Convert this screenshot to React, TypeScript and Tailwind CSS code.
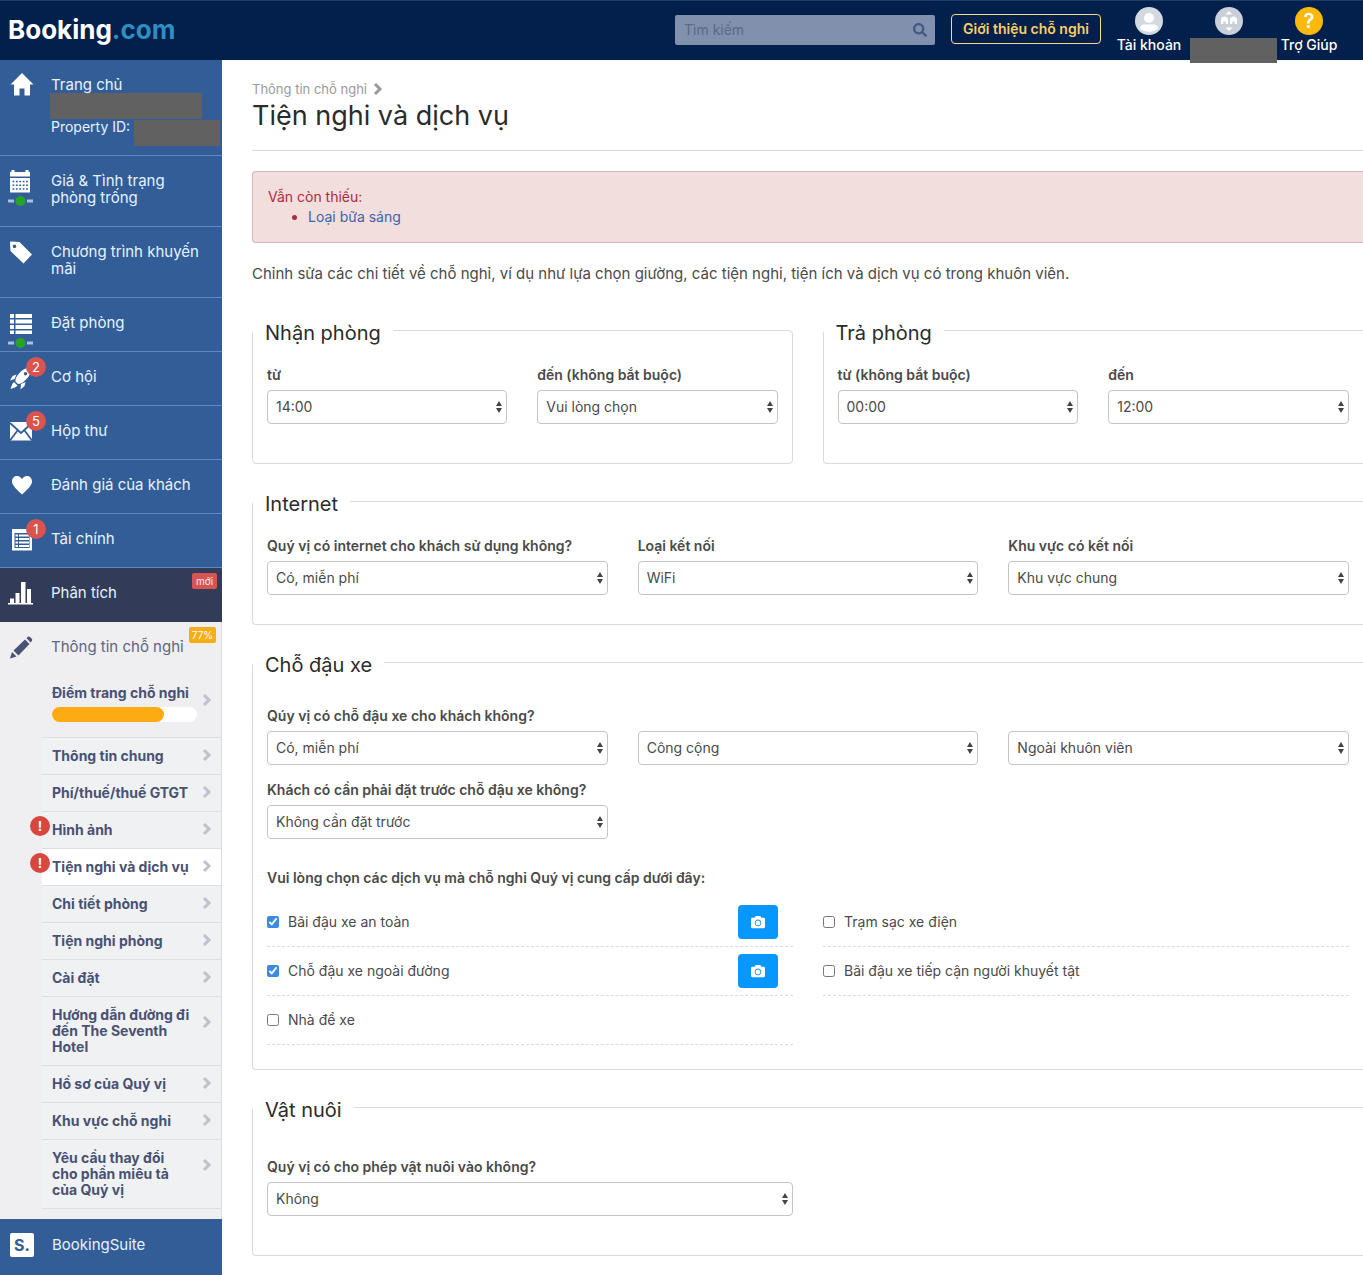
import React, { useState } from "react";
import { FaCamera, FaSearch } from "react-icons/fa";

interface NavItem {
  label: string;
  icon: React.ReactNode;
  count?: number;
  status?: boolean;
}

interface SubItem {
  lines: string[];
  alert?: boolean;
  active?: boolean;
}

interface SelectFieldProps {
  id: string;
  label?: string;
  ariaLabel?: string;
  options: string[];
}

interface Service {
  id: string;
  label: string;
  checked: boolean;
  photo: boolean;
}

const Icon = ({ children }: { children: React.ReactNode }) => (
  <svg viewBox="0 0 26 24" className="w-[26px] h-6 block" aria-hidden="true">
    {children}
  </svg>
);

const Chevron = ({ className = "" }: { className?: string }) => (
  <svg
    viewBox="0 0 10 14"
    className={`w-[10px] h-[14px] shrink-0 ${className}`}
    aria-hidden="true"
  >
    <path
      d="M2 2l5 5-5 5"
      fill="none"
      stroke="currentColor"
      strokeWidth="3"
    />
  </svg>
);

const HomeIcon = (
  <Icon>
    <path
      d="M14 0 25.500 11.500H22V22.500H16.500V15.500H11.500V22.500H6V11.500H2.500z"
      fill="#fff"
    />
  </Icon>
);

const CalendarIcon = (
  <Icon>
    <path d="M2 2h1.500V0h3v2h11V0h3v2H22v4.500H2zM2 8h20v14.500H2z" fill="#fff" />
    <path
      d="M4.500 11.500h15.500M4.500 15.200h15.500M4.500 19h15.500"
      stroke="#335d97"
      strokeWidth="1.600"
      strokeDasharray="1.800 1.600"
    />
  </Icon>
);

const TagIcon = (
  <Icon>
    <path
      fillRule="evenodd"
      d="M2 1.500Q2 .5 3 .5L11.500 1 24 13.500 15.500 22.500 2.500 10zM6.500 3.500a1.800 1.800 0 1 0 .01 0z"
      fill="#fff"
    />
  </Icon>
);

const ListIcon = (
  <Icon>
    <path
      d="M2 2h4v4H2zM7.500 2H24v4H7.500zM2 7.500h4v4H2zM7.500 7.500H24v4H7.500zM2 13h4v4H2zM7.500 13H24v4H7.500zM2 18.500h4v3.500H2zM7.500 18.500H24v3.500H7.500z"
      fill="#fff"
    />
  </Icon>
);

const RocketIcon = (
  <Icon>
    <path
      fillRule="evenodd"
      d="M23.500 1C18 1.500 13.500 4 10.500 8 8 11 7 13.500 7.500 15.500L10 18c2.500 0 5-1.500 7.500-4 4-3.500 6-8 6-13zM17.500 6a1.700 1.700 0 1 1-.01 0z"
      fill="#fff"
    />
    <path
      d="M8.500 8.500 4.500 10 2 14.500l4.500-1.500zM17.500 16l-1 4-4 3.500.5-5.500zM6 16l3.500 3.500-1.500 1.500-5.500 2L4.500 17.500z"
      fill="#fff"
    />
  </Icon>
);

const MailIcon = (
  <Icon>
    <path d="M2 2h22v18.500H2z" fill="#fff" />
    <path
      d="M2 3l11 10L24 3M2 20.500l7.500-10M24 20.500l-7.500-10"
      fill="none"
      stroke="#335d97"
      strokeWidth="1.800"
    />
  </Icon>
);

const HeartIcon = (
  <Icon>
    <path
      d="M14 20.500C10 16.500 4 12 4 7.500 4 4 6.500 2 9 2c2.500 0 4 1.500 5 3 1-1.500 2.500-3 5-3 2.500 0 5 2 5 5.500 0 4.500-6 9-10 13z"
      fill="#fff"
    />
  </Icon>
);

const FinanceIcon = (
  <Icon>
    <path d="M4 1h20v21.500H4z" fill="#fff" />
    <path d="M6.500 5h15v15h-15z" fill="#335d97" />
    <path
      d="M7.500 6.500h2.500v2H7.500zM11 6.500h10v2H11zM7.500 10h2.500v2H7.500zM11 10h10v2H11zM7.500 13.500h2.500v2H7.500zM11 13.500h10v2H11zM7.500 17h2.500v2H7.500zM11 17h10v2H11z"
      fill="#fff"
    />
  </Icon>
);

const ChartIcon = (
  <Icon>
    <path
      d="M0 21h25v1.500H0zM2 16.500h4V21H2zM7.500 11h4v10h-4zM13 0h4.500v21H13zM19 7h4v14h-4z"
      fill="#fff"
    />
  </Icon>
);

const PencilIcon = (
  <Icon>
    <path
      d="M2 22.500l2-6.500 4.500 4.500zM5.500 14.500 17 3.500l4.500 4.500L10.500 19.500zM18.500 2l1.500-1.200q1-.6 2 .2l1.800 1.800q.8 1 .2 2L22.500 6.500z"
      fill="#485273"
    />
  </Icon>
);

const navItems: NavItem[] = [
  { label: "Giá & Tình trạng\nphòng trống", icon: CalendarIcon, status: true },
  { label: "Chương trình khuyến\nmãi", icon: TagIcon },
  { label: "Đặt phòng", icon: ListIcon, status: true },
  { label: "Cơ hội", icon: RocketIcon, count: 2 },
  { label: "Hộp thư", icon: MailIcon, count: 5 },
  { label: "Đánh giá của khách", icon: HeartIcon },
  { label: "Tài chính", icon: FinanceIcon, count: 1 },
];

const subItems: SubItem[] = [
  { lines: ["Thông tin chung"] },
  { lines: ["Phí/thuế/thuế GTGT"] },
  { lines: ["Hình ảnh"], alert: true },
  { lines: ["Tiện nghi và dịch vụ"], alert: true, active: true },
  { lines: ["Chi tiết phòng"] },
  { lines: ["Tiện nghi phòng"] },
  { lines: ["Cài đặt"] },
  { lines: ["Hướng dẫn đường đi", "đến The Seventh", "Hotel"] },
  { lines: ["Hồ sơ của Quý vị"] },
  { lines: ["Khu vực chỗ nghỉ"] },
  { lines: ["Yêu cầu thay đổi", "cho phần miêu tả", "của Quý vị"] },
];

const initialServices: Service[][] = [
  [
    { id: "secured", label: "Bãi đậu xe an toàn", checked: true, photo: true },
    { id: "street", label: "Chỗ đậu xe ngoài đường", checked: true, photo: true },
    { id: "garage", label: "Nhà để xe", checked: false, photo: false },
  ],
  [
    { id: "charging", label: "Trạm sạc xe điện", checked: false, photo: false },
    {
      id: "accessible",
      label: "Bãi đậu xe tiếp cận người khuyết tật",
      checked: false,
      photo: false,
    },
  ],
];

const SelectField: React.FC<SelectFieldProps> = ({
  id,
  label,
  ariaLabel,
  options,
}) => (
  <div className="flex flex-col justify-end min-w-0">
    {label && (
      <label
        htmlFor={id}
        className="mb-[5px] text-sm leading-5 font-semibold whitespace-nowrap"
      >
        {label}
      </label>
    )}
    <div className="relative">
      <select
        id={id}
        aria-label={ariaLabel}
        className="appearance-none block w-full h-[34px] pl-2 pr-5 text-sm text-[#4a4a4a] bg-white border border-[#c4c4c4] rounded"
      >
        {options.map((option) => (
          <option key={option}>{option}</option>
        ))}
      </select>
      <svg
        viewBox="0 0 8 12"
        className="absolute right-1 top-[11px] w-2 h-3 pointer-events-none"
        aria-hidden="true"
      >
        <path d="M4 0 7 5H1zM4 12 1 7h6z" fill="#444" />
      </svg>
    </div>
  </div>
);

const Legend = ({ children }: { children: React.ReactNode }) => (
  <legend className="-ml-[14px] px-3 pt-[6px] text-xl leading-6 text-[#2b2b2b]">
    {children}
  </legend>
);

const Header = () => (
  <header className="flex items-start h-[60px] bg-[#02204b] border-t border-[#1f3c66] text-white">
    <a
      href="#home"
      className="pl-2 pt-[9px] text-[26px] leading-10 font-bold"
    >
      Booking<span className="text-[#2f8fc0]">.com</span>
    </a>
    <div className="flex items-start ml-auto pr-[14px]">
      <div className="flex items-center w-[260px] h-[30px] mt-[14px] mr-4 pl-[9px] pr-2 rounded-xs bg-[#8090ad]">
        <input
          type="text"
          aria-label="Tìm kiếm"
          placeholder="Tìm kiếm"
          className="flex-1 min-w-0 text-sm bg-transparent placeholder:text-[#5a6a87]"
        />
        <FaSearch className="w-[14px] h-[14px] text-[#415a85]" />
      </div>
      <button className="w-[150px] h-[30px] mt-[13px] mr-2 border border-[#f3dc8c] rounded text-sm font-semibold whitespace-nowrap text-[#fbcf66]">
        Giới thiệu chỗ nghỉ
      </button>
      <a
        href="#account"
        className="flex flex-col items-center w-20 pt-[6px] text-sm leading-5 font-medium whitespace-nowrap"
      >
        <svg viewBox="0 0 28 28" className="w-7 h-7" aria-hidden="true">
          <circle cx="14" cy="14" r="14" fill="#d3d9e0" />
          <circle cx="14" cy="11" r="5" fill="#fff" />
          <path d="M5 22q0-4.500 4-4.500h10q4 0 4 4.500-9 6-18 0z" fill="#fff" />
        </svg>
        Tài khoản
      </a>
      <a
        href="#group"
        aria-label="Nhóm chỗ nghỉ"
        className="relative flex flex-col items-center w-20 pt-[6px]"
      >
        <svg viewBox="0 0 28 28" className="w-7 h-7" aria-hidden="true">
          <circle cx="14" cy="14" r="14" fill="#c9d0d9" />
          <path
            d="M6 17v-4q0-3.500 3.500-3.500T13 13v4h-2.300v-2.500H8.300V17zM15 17v-4q0-3.500 3.500-3.500T22 13v4h-2.300v-2.500h-2.400V17zM10.500 7.500 14 4l3.500 3.500zM10.500 20.500h7L14 24z"
            fill="#fff"
          />
        </svg>
        <span className="absolute left-px top-[37px] w-[87px] h-[25px] bg-[#616161]" />
      </a>
      <a
        href="#help"
        className="flex flex-col items-center w-20 pt-[6px] text-sm leading-5 font-medium whitespace-nowrap"
      >
        <span className="flex items-center justify-center w-7 h-7 rounded-full bg-[#fbb90c] text-xl font-semibold">
          ?
        </span>
        Trợ Giúp
      </a>
    </div>
  </header>
);

const Sidebar = () => (
  <nav className="w-[222px] shrink-0 bg-[#335d97] text-[15px] leading-[17px] text-[#e6f3ff]">
    <a
      href="#home"
      className="flex h-24 pl-2 pt-[13px] gap-[17px] border-b border-[#6187bd]"
    >
      {HomeIcon}
      <span className="flex-1 pt-[3px]">
        <span className="block">Trang chủ</span>
        <span className="block w-[152px] h-[26px] -ml-px bg-[#616161]" />
        <span className="flex gap-1 text-sm leading-4 whitespace-nowrap">
          Property ID:
          <span className="w-[86px] h-[26px] mt-px bg-[#616161]" />
        </span>
      </span>
    </a>

    {navItems.map((item) => (
      <a
        key={item.label}
        href="#nav"
        className="relative flex pl-2 pt-[14px] gap-[17px] border-b border-[#6187bd]"
      >
        <span className="w-[26px]">
          {item.icon}
          {item.status && (
            <svg
              viewBox="0 0 26 12"
              className="block w-[26px] h-3 mt-px"
              aria-hidden="true"
            >
              <path d="M0 6h6M19 6h6" stroke="#a9c2e4" strokeWidth="3" />
              <circle cx="12.500" cy="6" r="5" fill="#27a327" />
            </svg>
          )}
        </span>
        {item.count && (
          <span className="absolute left-[26px] top-[5px] w-5 h-5 rounded-full bg-[#d9534f] text-[13px] leading-5 text-center text-white">
            {item.count}
          </span>
        )}
        <span className="pt-[2px] pb-5 whitespace-pre">{item.label}</span>
      </a>
    ))}

    <a
      href="#analytics"
      className="relative flex pl-2 pt-[14px] gap-[17px] bg-[#323b57] text-[#e6f3ff]"
    >
      {ChartIcon}
      <span className="pt-[2px] pb-[21px]">Phân tích</span>
      <span className="absolute right-[5px] top-[5px] w-[25px] h-4 rounded-xs bg-[#d9534f] text-[10px] leading-4 text-center">
        mới
      </span>
    </a>

    <div className="pb-[10px] bg-[#efeef0] border-r border-[#dcdce2] text-[#485273]">
      <a href="#property" className="relative flex h-[53px] pl-2 pt-[14px] gap-[17px]">
        {PencilIcon}
        <span className="pt-[2px] text-[#5d6684] whitespace-nowrap">
          Thông tin chỗ nghỉ
        </span>
        <span className="absolute right-[5px] top-[5px] w-[27px] h-4 rounded-xs bg-[#f9ad15] text-[10px] leading-4 text-center text-white">
          77%
        </span>
      </a>
      <ul className="ml-[42px] text-sm font-bold leading-4">
        <li className="border-b border-[#dedee4]">
          <a href="#score" className="flex pl-[10px] pt-[10px] pb-[15px] gap-[5px]">
            <span className="w-[145px]">
              <span className="block whitespace-nowrap">Điểm trang chỗ nghỉ</span>
              <span className="block h-[15px] mt-[6px] rounded-full bg-white">
                <span className="block w-[77%] h-full rounded-full bg-[#fcac12]" />
              </span>
            </span>
            <Chevron className="mt-2 text-[#bfc1cc]" />
          </a>
        </li>
        {subItems.map((item) => (
          <li
            key={item.lines[0]}
            className={`relative border-b border-[#dedee4] ${
              item.active ? "bg-white" : "bg-[#f0f1f3]"
            }`}
          >
            {item.alert && (
              <span className="absolute -left-3 top-1 w-5 h-5 rounded-full bg-[#d9463f] text-[13px] leading-5 text-center text-white">
                !
              </span>
            )}
            <a href="#section" className="flex pl-[10px] py-[10px]">
              <span className="w-[150px] whitespace-pre">
                {item.lines.join("\n")}
              </span>
              <Chevron
                className={`text-[#bfc1cc] ${
                  item.lines.length > 1 ? "mt-2" : ""
                }`}
              />
            </a>
          </li>
        ))}
      </ul>
    </div>

    <a href="#suite" className="flex pl-[10px] pt-[14px] pb-[18px] gap-[18px]">
      <span className="w-6 h-6 rounded-xs bg-white text-base leading-6 font-bold text-center text-[#335d97]">
        S.
      </span>
      <span className="pt-[3px]">BookingSuite</span>
    </a>
  </nav>
);

const App: React.FC = () => {
  const [services, setServices] = useState(initialServices);

  const toggle = (id: string) => {
    setServices((prev) =>
      prev.map((column) =>
        column.map((s) => (s.id === id ? { ...s, checked: !s.checked } : s))
      )
    );
  };

  return (
    <div className="min-h-screen flex flex-col bg-white overflow-x-hidden font-['Inter','Noto_Sans',sans-serif] text-sm text-[#4a4a4a]">
      <Header />
      <div className="flex flex-1">
        <Sidebar />
        <main className="flex-1 min-w-0 pl-[30px] pt-5 pb-5">
          <a
            href="#property"
            className="flex items-center gap-[6px] text-[13px] leading-[18px] text-[#9a9a9a]"
          >
            Thông tin chỗ nghỉ
            <Chevron />
          </a>
          <h1 className="text-[27px] leading-9 text-[#2b2b2b]">
            Tiện nghi và dịch vụ
          </h1>
          <hr className="mt-4 border-[#d8d8d8]" />

          {/* Missing information */}
          <div className="h-[72px] mt-5 pl-[15px] pt-[15px] border border-r-0 border-[#d3b8ba] rounded-l bg-[#f1dedd] leading-5 text-[#b02a3c]">
            Vẫn còn thiếu:
            <ul className="pl-10 list-disc">
              <li>
                <a href="#breakfast" className="text-[#3b64ad]">
                  Loại bữa sáng
                </a>
              </li>
            </ul>
          </div>

          <p className="mt-[21px] text-[15px] leading-5">
            Chỉnh sửa các chi tiết về chỗ nghỉ, ví dụ như lựa chọn giường, các
            tiện nghi, tiện ích và dịch vụ có trong khuôn viên.
          </p>

          <div className="grid grid-cols-2 gap-[30px] mt-[31px]">
            <fieldset className="min-w-0 px-[14px] pb-[39px] border border-[#dadada] rounded">
              <Legend>Nhận phòng</Legend>
              <div className="grid grid-cols-2 gap-[30px] pt-5">
                <SelectField id="in-from" label="từ" options={["14:00"]} />
                <SelectField
                  id="in-to"
                  label="đến (không bắt buộc)"
                  options={["Vui lòng chọn"]}
                />
              </div>
            </fieldset>
            <fieldset className="min-w-0 px-[14px] pb-[39px] border border-r-0 border-[#dadada] rounded-l">
              <Legend>Trả phòng</Legend>
              <div className="grid grid-cols-2 gap-[30px] pt-5">
                <SelectField
                  id="out-from"
                  label="từ (không bắt buộc)"
                  options={["00:00"]}
                />
                <SelectField id="out-to" label="đến" options={["12:00"]} />
              </div>
            </fieldset>
          </div>

          <fieldset className="mt-[22px] px-[14px] pb-[29px] border border-r-0 border-[#dadada] rounded-l">
            <Legend>Internet</Legend>
            <div className="grid grid-cols-3 gap-[30px] pt-5">
              <SelectField
                id="net"
                label="Quý vị có internet cho khách sử dụng không?"
                options={["Có, miễn phí"]}
              />
              <SelectField id="net-type" label="Loại kết nối" options={["WiFi"]} />
              <SelectField
                id="net-area"
                label="Khu vực có kết nối"
                options={["Khu vực chung"]}
              />
            </div>
          </fieldset>

          <fieldset className="mt-[22px] px-[14px] pb-6 border border-r-0 border-[#dadada] rounded-l">
            <Legend>Chỗ đậu xe</Legend>
            <div className="grid grid-cols-3 gap-x-[30px] gap-y-[15px] pt-[29px]">
              <SelectField
                id="parking"
                label="Qúy vị có chỗ đậu xe cho khách không?"
                options={["Có, miễn phí"]}
              />
              <SelectField
                id="parking-type"
                ariaLabel="Loại chỗ đậu xe"
                options={["Công cộng"]}
              />
              <SelectField
                id="parking-place"
                ariaLabel="Vị trí chỗ đậu xe"
                options={["Ngoài khuôn viên"]}
              />
              <SelectField
                id="parking-booking"
                label="Khách có cần phải đặt trước chỗ đậu xe không?"
                options={["Không cần đặt trước"]}
              />
            </div>

            <p className="mt-[29px] leading-5 font-semibold">
              Vui lòng chọn các dịch vụ mà chỗ nghỉ Quý vị cung cấp dưới đây:
            </p>
            <div className="grid grid-cols-2 gap-[30px] mt-[10px]">
              {services.map((column, i) => (
                <ul key={i}>
                  {column.map((service) => (
                    <li
                      key={service.id}
                      className="flex items-center h-[49px] pr-[15px] border-b border-dashed border-[#dcdcdc]"
                    >
                      <input
                        type="checkbox"
                        id={service.id}
                        checked={service.checked}
                        onChange={() => toggle(service.id)}
                        className="w-3 h-3 accent-[#3b8ae6]"
                      />
                      <label htmlFor={service.id} className="flex-1 pl-[9px]">
                        {service.label}
                      </label>
                      {service.photo && (
                        <button
                          type="button"
                          aria-label={`Thêm ảnh: ${service.label}`}
                          className="flex items-center justify-center w-10 h-[34px] rounded bg-[#0896ff] text-white"
                        >
                          <FaCamera className="w-[14px] h-[14px]" />
                        </button>
                      )}
                    </li>
                  ))}
                </ul>
              ))}
            </div>
          </fieldset>

          <fieldset className="mt-[22px] px-[14px] pb-[39px] border border-r-0 border-[#dadada] rounded-l">
            <Legend>Vật nuôi</Legend>
            <div className="grid grid-cols-2 gap-[30px] pt-[35px]">
              <SelectField
                id="pets"
                label="Quý vị có cho phép vật nuôi vào không?"
                options={["Không"]}
              />
            </div>
          </fieldset>
        </main>
      </div>
    </div>
  );
};

export default App;
